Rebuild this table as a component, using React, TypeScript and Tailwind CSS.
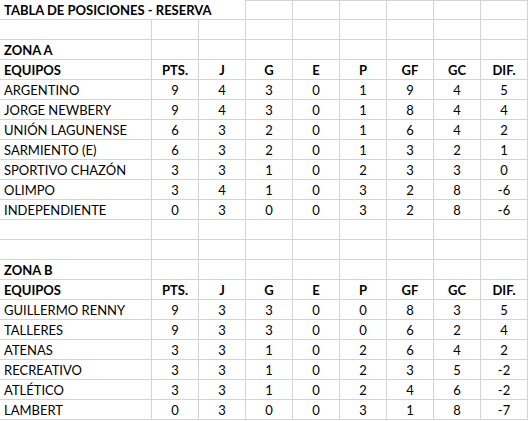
import React from "react";

type Row = [string, number, number, number, number, number, number, number, number];

const zonaA: Row[] = [
  ["ARGENTINO", 9, 4, 3, 0, 1, 9, 4, 5],
  ["JORGE NEWBERY", 9, 4, 3, 0, 1, 8, 4, 4],
  ["UNIÓN LAGUNENSE", 6, 3, 2, 0, 1, 6, 4, 2],
  ["SARMIENTO (E)", 6, 3, 2, 0, 1, 3, 2, 1],
  ["SPORTIVO CHAZÓN", 3, 3, 1, 0, 2, 3, 3, 0],
  ["OLIMPO", 3, 4, 1, 0, 3, 2, 8, -6],
  ["INDEPENDIENTE", 0, 3, 0, 0, 3, 2, 8, -6],
];

const zonaB: Row[] = [
  ["GUILLERMO RENNY", 9, 3, 3, 0, 0, 8, 3, 5],
  ["TALLERES", 9, 3, 3, 0, 0, 6, 2, 4],
  ["ATENAS", 3, 3, 1, 0, 2, 6, 4, 2],
  ["RECREATIVO", 3, 3, 1, 0, 2, 3, 5, -2],
  ["ATLÉTICO", 3, 3, 1, 0, 2, 4, 6, -2],
  ["LAMBERT", 0, 3, 0, 0, 3, 1, 8, -7],
];

const headers = ["PTS.", "J", "G", "E", "P", "GF", "GC", "DIF."];

const cell = "h-5 border-r border-b border-[#d4d4d4] leading-[20px] whitespace-nowrap";

function EmptyRow() {
  return (
    <>
      <div className={cell} />
      {headers.map((h) => (
        <div key={h} className={cell} />
      ))}
    </>
  );
}

function ZoneTitle({ title }: { title: string }) {
  return (
    <>
      <div className={`${cell} pl-[4px] font-bold`}>{title}</div>
      {headers.map((h) => (
        <div key={h} className={cell} />
      ))}
    </>
  );
}

function HeaderRow() {
  return (
    <>
      <div className={`${cell} pl-[4px] font-bold`}>EQUIPOS</div>
      {headers.map((h) => (
        <div key={h} className={`${cell} text-center font-bold`}>
          {h}
        </div>
      ))}
    </>
  );
}

function DataRows({ rows }: { rows: Row[] }) {
  return (
    <>
      {rows.map((r) => (
        <React.Fragment key={r[0]}>
          <div className={`${cell} pl-[4px]`}>{r[0]}</div>
          {r.slice(1).map((v, i) => (
            <div key={i} className={`${cell} text-center`}>
              {v}
            </div>
          ))}
        </React.Fragment>
      ))}
    </>
  );
}

export default function App() {
  return (
    <div
      className="w-[529px] h-[421px] bg-white text-black text-[13px] overflow-hidden"
      style={{ fontFamily: "Lato, 'Open Sans', sans-serif" }}
    >
      <div className="grid grid-cols-[152px_repeat(8,47px)]">
        <div className="col-span-3 h-5 border-r border-b border-[#d4d4d4] pl-[4px] font-bold leading-[20px] whitespace-nowrap">
          TABLA DE POSICIONES - RESERVA
        </div>
        {headers.slice(2).map((h) => (
          <div key={h} className={`${cell} border-t`} />
        ))}
        <EmptyRow />
        <ZoneTitle title="ZONA A" />
        <HeaderRow />
        <DataRows rows={zonaA} />
        <EmptyRow />
        <EmptyRow />
        <ZoneTitle title="ZONA B" />
        <HeaderRow />
        <DataRows rows={zonaB} />
      </div>
    </div>
  );
}
